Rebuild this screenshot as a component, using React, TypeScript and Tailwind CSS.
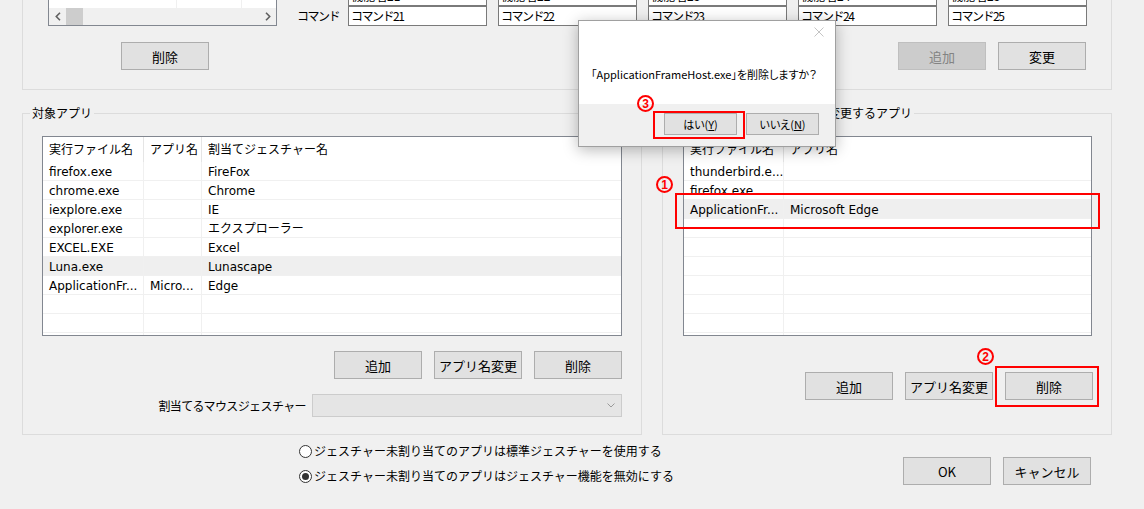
import React from "react";

const SANS = "font-['DejaVu_Sans','Noto_Sans_CJK_JP',sans-serif]";
const JP = "font-['Noto_Sans_CJK_JP',sans-serif]";

type Col = { label: string; cls: string };

const leftCols: Col[] = [
  { label: "実行ファイル名", cls: "w-[101px] border-r" },
  { label: "アプリ名", cls: "w-[58px] border-r" },
  { label: "割当てジェスチャー名", cls: "flex-1" },
];

const leftRows = [
  ["firefox.exe", "", "FireFox"],
  ["chrome.exe", "", "Chrome"],
  ["iexplore.exe", "", "IE"],
  ["explorer.exe", "", "エクスプローラー"],
  ["EXCEL.EXE", "", "Excel"],
  ["Luna.exe", "", "Lunascape"],
  ["ApplicationFr...", "Micro...", "Edge"],
];

const rightCols: Col[] = [
  { label: "実行ファイル名", cls: "w-[100px] border-r" },
  { label: "アプリ名", cls: "flex-1" },
];

const rightRows = [
  ["thunderbird.e...", ""],
  ["firefox.exe", ""],
  ["ApplicationFr...", "Microsoft Edge"],
];

function Button({ label, disabled }: { label: string; disabled?: boolean }) {
  return (
    <div
      className={`flex h-[28px] w-[88px] items-center justify-center border text-[13px] leading-none ${JP} ${
        disabled ? "border-[#bfbfbf] bg-[#cccccc] text-[#838383]" : "border-[#adadad] bg-[#e1e1e1] text-black"
      }`}
    >
      {label}
    </div>
  );
}

function ListView({ cols, rows, highlight, className }: { cols: Col[]; rows: string[][]; highlight: number; className: string }) {
  const filled = [...rows, ...Array(10 - rows.length).fill(cols.map(() => ""))];
  return (
    <div className={`flex flex-col overflow-hidden border border-[#828790] bg-white ${className}`}>
      <div className="flex h-[25px] shrink-0">
        {cols.map((c, i) => (
          <div key={i} className={`flex items-center border-[#e5e5e5] pl-[6px] text-[12px] leading-none ${c.cls}`}>
            {c.label}
          </div>
        ))}
      </div>
      {filled.map((r, ri) => (
        <div key={ri} className={`flex h-[19px] shrink-0 border-b border-[#f0f0f0] ${ri === highlight ? "bg-[#efefef]" : ""}`}>
          {cols.map((c, ci) => (
            <div key={ci} className={`flex items-center overflow-hidden whitespace-nowrap border-[#f0f0f0] pl-[6px] pt-[2px] text-[12px] leading-none ${c.cls}`}>
              {r[ci]}
            </div>
          ))}
        </div>
      ))}
    </div>
  );
}

function Chevron({ dir }: { dir: "left" | "right" | "down" }) {
  if (dir === "down")
    return (
      <svg width="8" height="5" viewBox="0 0 8 5">
        <path d="M0.5 0.5 L4 4 L7.5 0.5" fill="none" stroke="#9a9a9a" strokeWidth="1" />
      </svg>
    );
  return (
    <svg width="6" height="9" viewBox="0 0 6 9">
      <path d={dir === "left" ? "M5 0.8 L1.3 4.5 L5 8.2" : "M1 0.8 L4.7 4.5 L1 8.2"} fill="none" stroke="#606060" strokeWidth="1.6" />
    </svg>
  );
}

function Radio({ checked, label }: { checked?: boolean; label: string }) {
  return (
    <div className="flex h-[20px] items-center">
      <span className="flex h-[13px] w-[13px] items-center justify-center rounded-full border border-[#333333] bg-white">
        {checked && <span className="h-[7px] w-[7px] rounded-full bg-[#333333]" />}
      </span>
      <span className={`ml-[2px] text-[12px] leading-none ${JP}`}>{label}</span>
    </div>
  );
}

function Mark({ n, className }: { n: string; className: string }) {
  return (
    <span
      className={`absolute flex h-[17px] w-[17px] items-center justify-center rounded-full border-2 border-[#ff0000] text-[12px] font-bold leading-none text-[#ff0000] font-['Liberation_Sans',sans-serif] ${className}`}
    >
      {n}
    </span>
  );
}

export default function App() {
  const inputCols = ["21", "22", "23", "24", "25"];
  return (
    <div className={`relative h-[509px] w-[1144px] overflow-hidden bg-[#f0f0f0] text-black ${SANS}`}>
      {/* upper group (top is scrolled off) */}
      <div className="ml-[22px] mt-[-61px] flex h-[151px] w-[1090px] flex-col justify-end border border-[#dcdcdc] pb-[19px]">
        <div className="flex items-end pl-[25px]">
          <div className="flex h-[60px] w-[229px] flex-col border border-[#828790] bg-white">
            <div className="flex flex-1">
              <div className="w-[128px] border-r border-[#f0f0f0]" />
              <div className="w-[65px] border-r border-[#f0f0f0]" />
              <div className="flex-1" />
            </div>
            <div className="flex h-[17px] items-center bg-[#f0f0f0]">
              <div className="flex h-full w-[17px] items-center justify-center">
                <Chevron dir="left" />
              </div>
              <div className="h-full w-[17px] bg-[#cdcdcd]" />
              <div className="flex-1" />
              <div className="flex h-full w-[17px] items-center justify-center">
                <Chevron dir="right" />
              </div>
            </div>
          </div>
          <div className={`ml-[20px] flex w-[51px] flex-col text-[12px] leading-none ${JP}`}>
            <div className="h-[20px]" />
            <div className="flex h-[20px] items-center tracking-[-1.5px]">コマンド</div>
          </div>
          <div className="flex gap-[11px]">
            {inputCols.map((n) => (
              <div key={n} className="flex w-[139px] flex-col">
                <div className={`flex h-[20px] items-center border border-[#7a7a7a] bg-white pl-[2px] text-[12px] leading-none ${JP}`}>
                  機能名{n}
                </div>
                <div className={`flex h-[20px] items-center border border-[#7a7a7a] bg-white pl-[2px] text-[12px] leading-none tracking-[-1.5px] ${JP}`}>
                  コマンド{n}
                </div>
              </div>
            ))}
          </div>
        </div>
        <div className="mt-[16px] flex justify-between pl-[98px] pr-[25px]">
          <Button label="削除" />
          <div className="flex gap-[12px]">
            <Button label="追加" disabled />
            <Button label="変更" />
          </div>
        </div>
      </div>

      {/* app groups */}
      <div className="mt-[15px] flex gap-[20px] pl-[22px]">
        <fieldset className="h-[330px] w-[620px] border border-[#dcdcdc]">
          <legend className={`ml-[7px] px-[2px] text-[12px] leading-[16px] ${JP}`}>対象アプリ</legend>
          <div className="flex flex-col px-[19px] pt-[15px]">
            <ListView cols={leftCols} rows={leftRows} highlight={5} className="h-[200px] w-[580px]" />
            <div className="mt-[15px] flex justify-end gap-[12px]">
              <Button label="追加" />
              <Button label="アプリ名変更" />
              <Button label="削除" />
            </div>
            <div className="mt-[15px] flex items-center justify-end gap-[6px]">
              <span className={`text-[12px] leading-none tracking-[-0.6px] ${JP}`}>割当てるマウスジェスチャー</span>
              <div className="flex h-[23px] w-[310px] items-center justify-end border border-[#cccccc] bg-[#e5e5e5] pr-[6px]">
                <Chevron dir="down" />
              </div>
            </div>
          </div>
        </fieldset>
        <fieldset className="h-[330px] w-[450px] border border-[#dcdcdc]">
          <legend className={`ml-[7px] px-[2px] text-[12px] leading-[16px] ${JP}`}>ジェスチャーの設定を個別に変更するアプリ</legend>
          <div className="flex flex-col pl-[20px] pr-[18px] pt-[15px]">
            <ListView cols={rightCols} rows={rightRows} highlight={2} className="h-[200px] w-[409px]" />
            <div className="mt-[36px] flex justify-end gap-[12px]">
              <Button label="追加" />
              <Button label="アプリ名変更" />
              <Button label="削除" />
            </div>
          </div>
        </fieldset>
      </div>

      {/* bottom radios and buttons */}
      <div className="flex items-start pl-[299px] pr-[53px]">
        <div className="mt-[6px] flex flex-col gap-[5px]">
          <Radio label="ジェスチャー未割り当てのアプリは標準ジェスチャーを使用する" />
          <Radio checked label="ジェスチャー未割り当てのアプリはジェスチャー機能を無効にする" />
        </div>
        <div className="ml-auto mt-[22px] flex gap-[12px]">
          <Button label="OK" />
          <Button label="キャンセル" />
        </div>
      </div>

      {/* confirmation dialog */}
      <div className={`absolute left-[578px] top-[20px] flex h-[127px] w-[258px] flex-col border border-[#a0a0a0] bg-white shadow-[0_3px_14px_rgba(0,0,0,0.28)] ${JP} [font-feature-settings:'palt']`}>
        <div className="flex h-[83px] flex-col">
          <div className="flex justify-end pr-[11px] pt-[6px]">
            <svg width="10" height="10" viewBox="0 0 10 10">
              <path d="M0.5 0.5 L9.5 9.5 M9.5 0.5 L0.5 9.5" stroke="#c4c4c4" strokeWidth="1" />
            </svg>
          </div>
          <div className="mt-[29px] pl-[12px] text-[11px] leading-[16px]">「ApplicationFrameHost.exe」を削除しますか？</div>
        </div>
        <div className="flex flex-1 justify-end gap-[9px] bg-[#f0f0f0] pr-[16px] pt-[9px]">
          <div className="flex h-[22px] w-[73px] items-center justify-center border border-[#adadad] bg-[#e1e1e1] text-[11px] leading-none">
            はい(<span className="underline">Y</span>)
          </div>
          <div className="flex h-[22px] w-[73px] items-center justify-center border border-[#adadad] bg-[#e1e1e1] text-[11px] leading-none">
            いいえ(<span className="underline">N</span>)
          </div>
        </div>
      </div>

      {/* annotations */}
      <div className="absolute left-[675px] top-[193px] h-[36px] w-[425px] border-2 border-[#ff0000]" />
      <div className="absolute left-[995px] top-[366px] h-[41px] w-[104px] border-2 border-[#ff0000]" />
      <div className="absolute left-[653px] top-[111px] h-[28px] w-[92px] border-2 border-[#ff0000]" />
      <Mark n="1" className="left-[656px] top-[176px]" />
      <Mark n="2" className="left-[977px] top-[348px]" />
      <Mark n="3" className="left-[637px] top-[95px]" />
    </div>
  );
}
